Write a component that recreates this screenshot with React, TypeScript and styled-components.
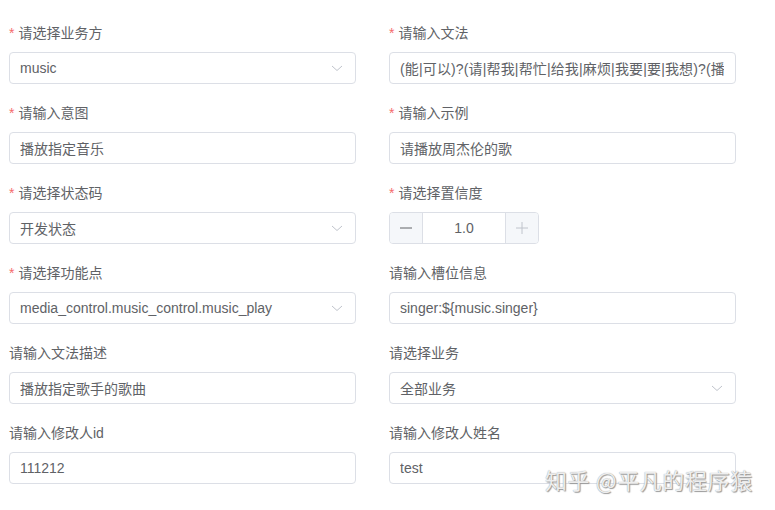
import React from 'react';
import styled, { createGlobalStyle } from 'styled-components';

const GlobalStyle = createGlobalStyle`
  body {
    margin: 0;
    background: #fff;
    font-family: "Liberation Sans", "Noto Sans CJK SC", sans-serif;
  }
`;

const Page = styled.div`
  position: relative;
  width: 775px;
  height: 510px;
  overflow: hidden;
  padding: 22px 9px 0;
  box-sizing: border-box;
`;

const Form = styled.div`
  display: grid;
  grid-template-columns: 347px 347px;
  column-gap: 33px;
  row-gap: 18px;
`;

const Item = styled.div`
  display: flex;
  flex-direction: column;
  gap: 8px;
`;

const Label = styled.label`
  font-size: 14px;
  line-height: 22px;
  height: 22px;
  color: #606266;
  display: flex;
  align-items: center;
`;

const Star = styled.span`
  color: #f56c6c;
  margin-right: 4px;
  font-size: 14px;
`;

const Box = styled.div`
  height: 32px;
  box-sizing: border-box;
  border: 1px solid #dcdfe6;
  border-radius: 4px;
  display: flex;
  align-items: center;
  padding: 0 11px 0 10px;
  font-size: 14px;
  color: #606266;
  background: #fff;
  overflow: hidden;
`;

const Value = styled.span<{ $wide?: boolean }>`
  flex: 1;
  white-space: nowrap;
  overflow: hidden;
  letter-spacing: ${p => (p.$wide ? '0.15px' : 'normal')};
`;

const Arrow = styled.svg`
  width: 14px;
  height: 14px;
  flex-shrink: 0;
`;

const Stepper = styled.div`
  width: 150px;
  height: 32px;
  box-sizing: border-box;
  border: 1px solid #dcdfe6;
  border-radius: 4px;
  display: flex;
  overflow: hidden;
`;

const StepBtn = styled.div<{ $side: 'left' | 'right' }>`
  width: 32px;
  background: #f5f7fa;
  display: flex;
  align-items: center;
  justify-content: center;
  ${p => (p.$side === 'left' ? 'border-right: 1px solid #dcdfe6;' : 'border-left: 1px solid #dcdfe6;')}
`;

const StepValue = styled.div`
  flex: 1;
  display: flex;
  align-items: center;
  justify-content: center;
  font-size: 14px;
  color: #606266;
`;

const Watermark = styled.div`
  position: absolute;
  left: 545px;
  top: 463px;
  font-family: "Noto Sans CJK SC", sans-serif;
  font-size: 22px;
  letter-spacing: 0.6px;
  color: rgba(255, 255, 255, 0.85);
  text-shadow: 0 0 1px #8a8a8a, 1px 1px 1px #9a9a9a;
  white-space: nowrap;
`;

const Chevron = () => (
  <Arrow viewBox="0 0 14 14">
    <path d="M2 5 L7 9.5 L12 5" fill="none" stroke="#c0c4cc" strokeWidth="1" />
  </Arrow>
);

type Field = {
  label: string;
  required?: boolean;
  value?: string;
  select?: boolean;
  stepper?: boolean;
};

const fields: Field[] = [
  { label: '请选择业务方', required: true, value: 'music', select: true },
  { label: '请输入文法', required: true, value: '(能|可以)?(请|帮我|帮忙|给我|麻烦|我要|要|我想)?(播放|听|来一首)' },
  { label: '请输入意图', required: true, value: '播放指定音乐' },
  { label: '请输入示例', required: true, value: '请播放周杰伦的歌' },
  { label: '请选择状态码', required: true, value: '开发状态', select: true },
  { label: '请选择置信度', required: true, stepper: true },
  { label: '请选择功能点', required: true, value: 'media_control.music_control.music_play', select: true },
  { label: '请输入槽位信息', value: 'singer:${music.singer}' },
  { label: '请输入文法描述', value: '播放指定歌手的歌曲' },
  { label: '请选择业务', value: '全部业务', select: true },
  { label: '请输入修改人id', value: '111212' },
  { label: '请输入修改人姓名', value: 'test' },
];

const App = () => {
  return (
    <Page>
      <GlobalStyle />
      <Form>
        {fields.map((f, i) => (
          <Item key={i}>
            <Label>
              {f.required && <Star>*</Star>}
              {f.label}
            </Label>
            {f.stepper ? (
              <Stepper>
                <StepBtn $side="left">
                  <svg width="14" height="14" viewBox="0 0 14 14">
                    <path d="M1 7 H13" stroke="#606266" strokeWidth="1" />
                  </svg>
                </StepBtn>
                <StepValue>1.0</StepValue>
                <StepBtn $side="right">
                  <svg width="14" height="14" viewBox="0 0 14 14">
                    <path d="M1 7 H13 M7 1 V13" stroke="#c0c4cc" strokeWidth="1" />
                  </svg>
                </StepBtn>
              </Stepper>
            ) : (
              <Box>
                <Value $wide={i === 1}>{f.value}</Value>
                {f.select && <Chevron />}
              </Box>
            )}
          </Item>
        ))}
      </Form>
      <Watermark>知乎 @平凡的程序猿</Watermark>
    </Page>
  );
};

export default App;
